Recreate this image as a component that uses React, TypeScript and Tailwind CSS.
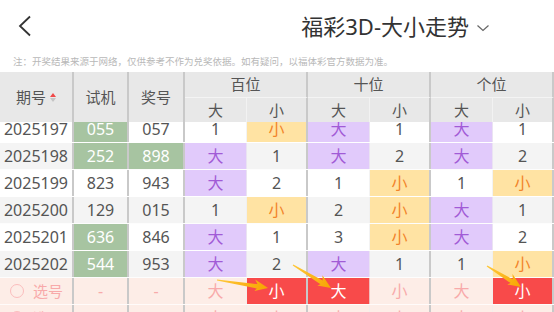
import React from "react";

type Cell = { text: string; tone?: "plain" | "green" | "purple" | "yellow" | "red" | "pink" };

const COLS = "grid-cols-[74px_55px_56px_62px_61px_62px_61px_62px_61px]";

const rows: { id: string; cells: Cell[] }[] = [
  {
    id: "2025197",
    cells: [
      { text: "055", tone: "green" },
      { text: "057" },
      { text: "1" },
      { text: "小", tone: "yellow" },
      { text: "大", tone: "purple" },
      { text: "1" },
      { text: "大", tone: "purple" },
      { text: "1" },
    ],
  },
  {
    id: "2025198",
    cells: [
      { text: "252", tone: "green" },
      { text: "898", tone: "green" },
      { text: "大", tone: "purple" },
      { text: "1" },
      { text: "大", tone: "purple" },
      { text: "2" },
      { text: "大", tone: "purple" },
      { text: "2" },
    ],
  },
  {
    id: "2025199",
    cells: [
      { text: "823" },
      { text: "943" },
      { text: "大", tone: "purple" },
      { text: "2" },
      { text: "1" },
      { text: "小", tone: "yellow" },
      { text: "1" },
      { text: "小", tone: "yellow" },
    ],
  },
  {
    id: "2025200",
    cells: [
      { text: "129" },
      { text: "015" },
      { text: "1" },
      { text: "小", tone: "yellow" },
      { text: "2" },
      { text: "小", tone: "yellow" },
      { text: "大", tone: "purple" },
      { text: "1" },
    ],
  },
  {
    id: "2025201",
    cells: [
      { text: "636", tone: "green" },
      { text: "846" },
      { text: "大", tone: "purple" },
      { text: "1" },
      { text: "3" },
      { text: "小", tone: "yellow" },
      { text: "大", tone: "purple" },
      { text: "2" },
    ],
  },
  {
    id: "2025202",
    cells: [
      { text: "544", tone: "green" },
      { text: "953" },
      { text: "大", tone: "purple" },
      { text: "2" },
      { text: "大", tone: "purple" },
      { text: "1" },
      { text: "1" },
      { text: "小", tone: "yellow" },
    ],
  },
];

const pickRows: Cell[][] = [
  [
    { text: "-", tone: "pink" },
    { text: "-", tone: "pink" },
    { text: "大", tone: "pink" },
    { text: "小", tone: "red" },
    { text: "大", tone: "red" },
    { text: "小", tone: "pink" },
    { text: "大", tone: "pink" },
    { text: "小", tone: "red" },
  ],
  [
    { text: "-", tone: "pink" },
    { text: "-", tone: "pink" },
    { text: "大", tone: "pink" },
    { text: "小", tone: "pink" },
    { text: "大", tone: "pink" },
    { text: "小", tone: "pink" },
    { text: "大", tone: "pink" },
    { text: "小", tone: "pink" },
  ],
];

const toneClass: Record<string, string> = {
  plain: "text-[#555555]",
  green: "bg-[#a7c4a1] text-white",
  purple: "bg-[#e1cafb] text-[#a15bd6]",
  yellow: "bg-[#ffe3a3] text-[#f2842a]",
  red: "bg-[#f84a4a] text-white",
  pink: "text-[#f8aaaa]",
};

// index 0..7 after 期号: which cells close a group (thick divider)
const groupEnd = [true, true, false, true, false, true, false, true];

function BodyRow({ first, cells, bg }: { first: React.ReactNode; cells: Cell[]; bg: string }) {
  return (
    <div className={`grid ${COLS} h-[27px] border-b border-white/80 ${bg}`}>
      {first}
      {cells.map((c, i) => (
        <div
          key={i}
          className={`flex items-center justify-center text-[16px] ${toneClass[c.tone ?? "plain"]} ${
            groupEnd[i] ? "border-r-2 border-[#c9c9c9]" : "border-r border-[#eeeeee]/70"
          }`}
        >
          {c.text}
        </div>
      ))}
    </div>
  );
}

const arrows = [
  { x1: 217, y1: 280, x2: 268, y2: 288 },
  { x1: 293, y1: 265, x2: 331, y2: 288 },
  { x1: 487, y1: 266, x2: 521, y2: 287 },
];

function Arrows() {
  return (
    <svg className="absolute inset-0 pointer-events-none" width={554} height={312}>
      <defs>
        <linearGradient id="ag" x1="0" y1="0" x2="1" y2="0">
          <stop offset="0" stopColor="#ffc83a" />
          <stop offset="1" stopColor="#f7a500" />
        </linearGradient>
      </defs>
      {arrows.map((a, i) => {
        const L = Math.hypot(a.x2 - a.x1, a.y2 - a.y1);
        const deg = (Math.atan2(a.y2 - a.y1, a.x2 - a.x1) * 180) / Math.PI;
        const pts = `0,-0.6 ${L - 11},-2.2 ${L - 14},-6.5 ${L},0 ${L - 13},5 ${L - 11},2.2 0,0.6`;
        return (
          <polygon
            key={i}
            points={pts}
            fill="url(#ag)"
            transform={`translate(${a.x1} ${a.y1}) rotate(${deg})`}
          />
        );
      })}
    </svg>
  );
}

function PickFirst() {
  return (
    <div className="flex items-center pl-[10px] gap-[9px] border-r-2 border-[#c9c9c9]">
      <span className="w-[14px] h-[14px] rounded-full border border-[#fbbdbd]" />
      <span className="text-[15px] text-[#f8aaaa]">选号</span>
    </div>
  );
}

export default function App() {
  return (
    <div
      className="relative w-[554px] h-[312px] overflow-hidden bg-white"
      style={{ fontFamily: '"Noto Sans", "Noto Sans CJK SC", sans-serif' }}
    >
      <div className="h-[52px] flex items-center">
        <svg className="ml-[18px]" width="14" height="22" viewBox="0 0 14 22">
          <path d="M12 1.5 L2 11 L12 20.5" fill="none" stroke="#333" strokeWidth="1.8" />
        </svg>
        <div className="ml-auto mr-[64px] flex items-center gap-[7px]">
          <span className="text-[22px] text-[#333333] leading-none">福彩3D-大小走势</span>
          <svg width="14" height="10" viewBox="0 0 14 10" className="mt-[4px]">
            <path d="M1.5 2.5 L7 7.5 L12.5 2.5" fill="none" stroke="#666" strokeWidth="1.2" />
          </svg>
        </div>
      </div>

      <div className="h-[20px] pl-[13px] flex items-center text-[9.5px] text-[#b8b8b8] leading-none">
        注：开奖结果来源于网络，仅供参考不作为兑奖依据。如有疑问，以福体彩官方数据为准。
      </div>

      <div className={`grid ${COLS} grid-rows-[26px_24px] bg-[#e8e8e8] text-[#555555] text-[15px]`}>
        <div className="row-span-2 flex items-center justify-center gap-[4px] border-r-2 border-[#c9c9c9]">
          <span>期号</span>
          <span className="flex flex-col gap-[1px]">
            <span className="w-0 h-0 border-l-[3px] border-r-[3px] border-b-[4px] border-l-transparent border-r-transparent border-b-[#f04848]" />
            <span className="w-0 h-0 border-l-[3px] border-r-[3px] border-t-[4px] border-l-transparent border-r-transparent border-t-[#c4c4c4]" />
          </span>
        </div>
        <div className="row-span-2 flex items-center justify-center border-r-2 border-[#c9c9c9]">试机</div>
        <div className="row-span-2 flex items-center justify-center border-r-2 border-[#c9c9c9]">奖号</div>
        {["百位", "十位", "个位"].map((g) => (
          <div key={g} className="col-span-2 flex items-center justify-center border-r-2 border-b border-b-[#f4f4f4] border-r-[#c9c9c9]">
            {g}
          </div>
        ))}
        {[0, 1, 2].map((g) => (
          <React.Fragment key={g}>
            <div className="flex items-center justify-center border-r border-[#f2f2f2]">大</div>
            <div className="flex items-center justify-center border-r-2 border-[#c9c9c9]">小</div>
          </React.Fragment>
        ))}
      </div>

      <div className="h-[190px] overflow-hidden">
        <div className="-mt-[6px]">
          {rows.map((r, i) => (
            <BodyRow
              key={r.id}
              bg={i % 2 === 0 ? "bg-white" : "bg-[#f4f4f4]"}
              cells={r.cells}
              first={
                <div className="flex items-center justify-center text-[16px] text-[#555555] border-r-2 border-[#c9c9c9]">
                  {r.id}
                </div>
              }
            />
          ))}
          {pickRows.map((cells, i) => (
            <BodyRow key={i} bg="bg-[#fdede7]" cells={cells} first={<PickFirst />} />
          ))}
        </div>
      </div>

      <Arrows />
    </div>
  );
}
